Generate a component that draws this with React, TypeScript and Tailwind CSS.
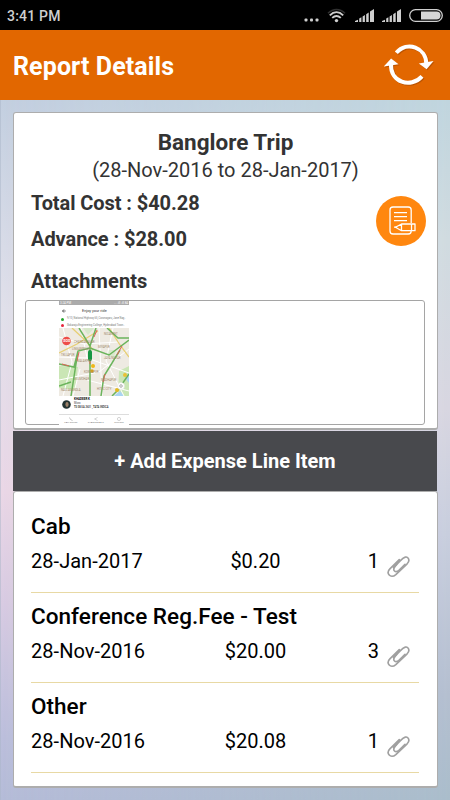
type Expense = {
    title: string;
    date: string;
    amount: string;
    count: number;
};

const expenses: Expense[] = [
    { title: "Cab", date: "28-Jan-2017", amount: "$0.20", count: 1 },
    { title: "Conference Reg.Fee - Test", date: "28-Nov-2016", amount: "$20.00", count: 3 },
    { title: "Other", date: "28-Nov-2016", amount: "$20.08", count: 1 },
];

const SignalIcon = () => (
    <svg width="19" height="13" viewBox="0 0 19 13" fill="#cfcfcf">
        <path d="M0 13V12L3 10.800V13ZM4.200 13V9.500L6.400 8.200V13ZM7.600 13V7.500L9.900 6V13ZM11.200 13V5.200L13.700 3.600V13ZM15 13V2.400L19 0V13Z" />
    </svg>
);

const StatusBar = () => (
    <div className="h-[30px] bg-black text-[#cfcfcf] flex items-center justify-between pl-[7px] pr-[7px]">
        <span className="text-[14px] font-medium tracking-[0.2px] pt-[2px]">3:41 PM</span>
        <div className="flex items-center">
            <svg width="15" height="4" viewBox="0 0 15 4" className="mt-[9px] mr-[8px]" fill="#cfcfcf">
                <rect x="0.500" y="0.500" width="3" height="3" rx="1" />
                <rect x="6" y="0.500" width="3" height="3" rx="1" />
                <rect x="11.500" y="0.500" width="3" height="3" rx="1" />
            </svg>
            <svg width="19" height="15" viewBox="0 0 19 15" className="mr-[9px] mt-[1px]" fill="none">
                <path d="M1 5.200C6 0.200 13 0.200 18 5.200" stroke="#303030" strokeWidth="1.600" />
                <path d="M2.800 7.300C7 3.100 12 3.100 16.200 7.300M5.200 9.900C8 7.400 11 7.400 13.800 9.900" stroke="#cfcfcf" strokeWidth="1.900" />
                <circle cx="9.500" cy="12.600" r="1.700" fill="#cfcfcf" />
            </svg>
            <SignalIcon />
            <span className="w-[8px]" />
            <SignalIcon />
            <svg width="34" height="13" viewBox="0 0 34 13" className="ml-[8px]">
                <rect x="0.700" y="0.700" width="32.600" height="11.600" rx="5.800" fill="none" stroke="#cfcfcf" strokeWidth="1.300" />
                <path d="M12 2.500H27.500A4 4 0 0 1 27.500 10.500H12Z" fill="#d6d6d6" />
            </svg>
        </div>
    </div>
);

const RefreshIcon = () => (
    <svg width="50" height="44" viewBox="0 0 50 44" className="drop-shadow-[1px_1px_0.5px_rgba(120,50,0,0.35)]">
        <path d="M12.300 9.800C23 -2.500 42.500 4.500 42.300 21" fill="none" stroke="#fff" strokeWidth="4" />
        <path d="M34.800 20.400L49.500 18L42.600 26.200Z" fill="#fff" />
        <path d="M38 33.300C26.500 46 6 39 7 21" fill="none" stroke="#fff" strokeWidth="4" />
        <path d="M-0.100 23.400L14.600 21.200L7.100 15.600Z" fill="#fff" />
    </svg>
);

const NoteIcon = () => (
    <svg width="50" height="50" viewBox="0 0 50 50">
        <circle cx="25" cy="25" r="25" fill="#ff870f" />
        <g fill="none" stroke="#fff" strokeWidth="1.300" strokeLinejoin="round">
            <path d="M35.200 27V14A3 3 0 0 0 32.200 11H17A3 3 0 0 0 14 14V35A3 3 0 0 0 17 38H32.200A3 3 0 0 0 35.200 35" />
            <path d="M18 16.700H31M18 20.700H31M18 24.700H31M18 31.200H21" />
            <path d="M19.500 31.300L25.500 28H39V34.700H25.500ZM25.500 28V34.700M35.500 28V34.700" />
        </g>
    </svg>
);

const ClipIcon = () => (
    <svg width="23" height="23" viewBox="0 0 24 24" fill="none" stroke="#a0a0a0" strokeWidth="1.700" strokeLinecap="round">
        <path d="M6.800 13.200L14 5.800C18.500 1.200 20.500 1.700 21.700 2.900C23.700 4.900 22.800 7.200 21 9.200L9.200 20.400C6.300 23 3.600 22.400 2.300 20.900C0.800 19.200 1 16.500 3 14.500L12.800 4.700" />
        <path d="M10.200 9.800C6.800 13 6.400 15.500 7.800 16.700C9.200 18 11.400 17 13 15.500L18.800 9.800" />
    </svg>
);

const MapDrawing = () => (
    <svg width="70" height="68" viewBox="0 0 70 68" className="block">
        <rect width="70" height="68" fill="#eeeae2" />
        <path d="M0 38L19 39L16 62L0 60ZM60 43L70 38V68H59Z" fill="#cae6b5" />
        <path d="M24 0L29 7L35 0ZM49 22L57 22L55 29L48 28Z" fill="#d8e8cb" />
        <path d="M70 45L66 50L70 55ZM55 68L61 63L65 68Z" fill="#a9d4f3" />
        <g fill="none" stroke="#fff" strokeWidth="1">
            <path d="M0 9L25 16L60 14M4 0L13 34L4 68M22 0L28 30L70 45M0 52L40 44L70 21M40 0L43 68M54 0L47 33L65 68M0 29L28 30M14 68L21 41M28 52L70 63" />
        </g>
        <g fill="none" stroke="#e7cf75" strokeWidth="1.300">
            <path d="M13 0L27 13L34 22M0 25L18 16L39 3M50 0L61 17L70 29" />
        </g>
        <g fill="none" stroke="#6bb45c" strokeWidth="1.500">
            <path d="M20 0L31 18V68M0 36L15 39L19 23L31 20L50 27L70 12M37 0L31 18M48 0L59 10L70 10M19 23L12 68M61 22L45 48L42 68M70 46L59 62L53 68M0 58L12 54" />
        </g>
        <g fill="none" stroke="#df6359" strokeWidth="1">
            <path d="M31 25V36M20 24L18 33M38 2L35 9M63 18L58 27M46 46L44 54M3 36L10 38" />
        </g>
        <path d="M31 24V31" stroke="#169743" strokeWidth="4" strokeLinecap="round" />
        <circle cx="34" cy="38" r="2" fill="#efb817" />
        <circle cx="33" cy="43" r="1.800" fill="#e4a70e" />
        <circle cx="58" cy="62" r="2" fill="#e4b921" />
        <circle cx="66" cy="47" r="2" fill="#e9c136" />
        <g fill="#a08867" fontSize="2.800" fontFamily="Roboto, sans-serif">
            <text x="15" y="15">CHANDANAGAR</text>
            <text x="13" y="22">LINGAMPALLY</text>
            <text x="2" y="28">TELLAPUR</text>
            <text x="39" y="20">MIYAPUR</text>
            <text x="45" y="7">NIZAMPET</text>
            <text x="18" y="34">MALAKPET</text>
            <text x="45" y="31">JAYA NAGAR</text>
            <text x="25" y="45">KONDAPUR</text>
            <text x="15" y="52">GULMOHAR</text>
            <text x="42" y="53">MADHAPUR</text>
            <text x="2" y="63">NALLAGANDLA</text>
            <text x="38" y="62">HITEC CITY</text>
        </g>
        <circle cx="7.500" cy="13" r="4.300" fill="#ee4d48" />
        <text x="4.200" y="14.400" fill="#fff" fontSize="3.600" fontWeight="700" fontFamily="Roboto, sans-serif">SOS</text>
        <circle cx="62" cy="58" r="3.500" fill="#fff" stroke="#ddd" strokeWidth="0.400" />
        <circle cx="62" cy="58" r="1.300" fill="none" stroke="#777" strokeWidth="0.600" />
    </svg>
);

const RideThumbnail = () => (
    <div className="w-[70px] h-[125px] bg-white text-[3.5px] leading-none text-[#777]">
        <div className="h-[4px] bg-[#ababab] text-white text-[3px] flex items-center justify-between px-[1px]">
            <span>3:24 PM</span>
            <span>... .ill .ill 84</span>
        </div>
        <div className="h-[11px] flex items-center pl-[3px] text-[#333]">
            <svg width="4" height="4" viewBox="0 0 4 4" fill="none" stroke="#333" strokeWidth="0.700">
                <path d="M2 0.400L0.500 2L2 3.600M0.500 2H3.700" />
            </svg>
            <span className="ml-[16px] text-[3.8px]">Enjoy your ride</span>
        </div>
        <div className="h-[6px] flex items-center gap-[3px] pl-[2px] whitespace-nowrap">
            <span className="w-[3px] h-[3px] shrink-0 rounded-full bg-[#22a52a]" />
            <span className="text-[2.6px]">9/10, National Highway 65, Coronagaru, Jane Nag..</span>
        </div>
        <div className="h-[6px] flex items-center gap-[3px] pl-[2px] whitespace-nowrap">
            <span className="w-[3px] h-[3px] shrink-0 rounded-full bg-[#e7263c]" />
            <span className="text-[2.7px]">Gokaraju Engineering College, Hyderabad Town..</span>
        </div>
        <MapDrawing />
        <div className="h-[18px] flex items-center gap-[3px] pl-[3px] pb-[2px] text-[#444]">
            <svg width="9" height="9" viewBox="0 0 9 9">
                <circle cx="4.500" cy="4.500" r="4.300" fill="#233332" />
                <ellipse cx="5" cy="4.500" rx="1.600" ry="2.400" fill="#9b8068" />
            </svg>
            <div className="flex flex-col gap-[1.5px]">
                <span className="font-bold text-black text-[3px]">KHADEER K</span>
                <span className="text-[2.6px]">Micro</span>
                <span className="text-[2.6px] font-medium text-[#222]">TS 08 UA 2631 , TATA INDICA</span>
            </div>
        </div>
        <div className="h-[12px] border-t border-[#ddd] flex justify-around pt-[2px] text-[2.2px]">
            <div className="flex flex-col items-center gap-[1px]">
                <svg width="4" height="4" viewBox="0 0 4 4" fill="none" stroke="#aaa" strokeWidth="0.700"><path d="M0.500 0.500Q1 3 3.500 3.500" /></svg>
                <span>CALL DRIVER</span>
            </div>
            <div className="flex flex-col items-center gap-[1px]">
                <svg width="4" height="4" viewBox="0 0 4 4" fill="none" stroke="#aaa" strokeWidth="0.500"><path d="M3.500 0.500L0.600 2L3.500 3.500" /></svg>
                <span>SHARE DETAILS</span>
            </div>
            <div className="flex flex-col items-center gap-[1px]">
                <svg width="4" height="4" viewBox="0 0 4 4" fill="none" stroke="#aaa" strokeWidth="0.500"><circle cx="2" cy="2" r="1.600" /></svg>
                <span>SUPPORT</span>
            </div>
        </div>
    </div>
);

const ExpenseRow = ({ expense }: { expense: Expense }) => (
    <div className="h-[90px] border-b border-[#e8d9a4] text-black">
        <h2 className="text-[22.5px] leading-[26px] font-medium tracking-[0.04px] pt-[10px]">{expense.title}</h2>
        <div className="flex text-[20px] leading-[24px] pt-[10px]">
            <span className="w-[157px] tracking-[0.04px]">{expense.date}</span>
            <span className="w-[135px] text-center">{expense.amount}</span>
            <span className="w-[56px] text-right">{expense.count}</span>
            <span className="ml-[8px] mt-[6px] w-[23px]"><ClipIcon /></span>
        </div>
    </div>
);

const App = () => {
    return (
        <div className="w-[450px] h-[800px] overflow-hidden font-[Roboto,sans-serif] flex flex-col">
            <StatusBar />
            <header className="h-[70px] bg-[#e26700] flex items-center justify-between pl-[13px] pr-[16px]">
                <h1 className="text-white text-[25px] font-bold tracking-[0.1px] pt-[3px]">Report Details</h1>
                <RefreshIcon />
            </header>
            <main className="grid h-[700px] bg-[linear-gradient(180deg,#c3cfe0_0%,#e1e0ea_30%,#ead7e6_56%,#d8cbe2_72%,#bcbfdc_91%,#b5bcd8_100%)]">
                <div className="col-start-1 row-start-1 bg-[linear-gradient(180deg,#c0d5de_0%,#d0dbe0_20%,#d8d6e1_44%,#c8cede_62%,#b4bfd0_85%,#aabdcb_100%)] [mask-image:linear-gradient(90deg,transparent,black)]" />
                <div className="col-start-1 row-start-1 z-10 pl-[13px] pr-[12px] pt-[12px] border-l border-[#aab5c8]/50">
                    <section className="h-[318px] bg-white border border-b-2 border-[#adadad] rounded-[3px] text-[#333] -ml-px">
                        <div className="text-center pt-[15px]">
                            <h2 className="text-[22.5px] leading-[28px] font-bold">Banglore Trip</h2>
                            <p className="text-[20px] leading-[28px]">(28-Nov-2016 to 28-Jan-2017)</p>
                        </div>
                        <div className="flex justify-between pl-[17px] pr-[11px] text-[20px] font-bold">
                            <div>
                                <p className="leading-[24px] pt-[7px] tracking-[-0.07px]">Total Cost : $40.28</p>
                                <p className="leading-[24px] pt-[12px] tracking-[-0.04px]">Advance : $28.00</p>
                            </div>
                            <div className="pt-[12px]"><NoteIcon /></div>
                        </div>
                        <p className="pl-[17px] text-[20px] leading-[24px] font-bold tracking-[0.08px] pt-[18px]">Attachments</p>
                        <div className="ml-[11px] mr-[12px] mt-[7px] h-[125px] border border-[#a5a5a5] rounded-[3px] pl-[33px]">
                            <RideThumbnail />
                        </div>
                    </section>
                    <button className="block w-[424px] -ml-px h-[60px] bg-[#48494d] text-white text-[20px] font-bold text-center mt-px">
                        + Add Expense Line Item
                    </button>
                    <section className="h-[297px] bg-white border border-b-2 border-[#adadad] rounded-[3px] pl-[17px] pr-[18px] pt-[11px] -ml-px">
                        {expenses.map((expense) => (
                            <ExpenseRow key={expense.title} expense={expense} />
                        ))}
                    </section>
                </div>
            </main>
        </div>
    );
};

export default App;
